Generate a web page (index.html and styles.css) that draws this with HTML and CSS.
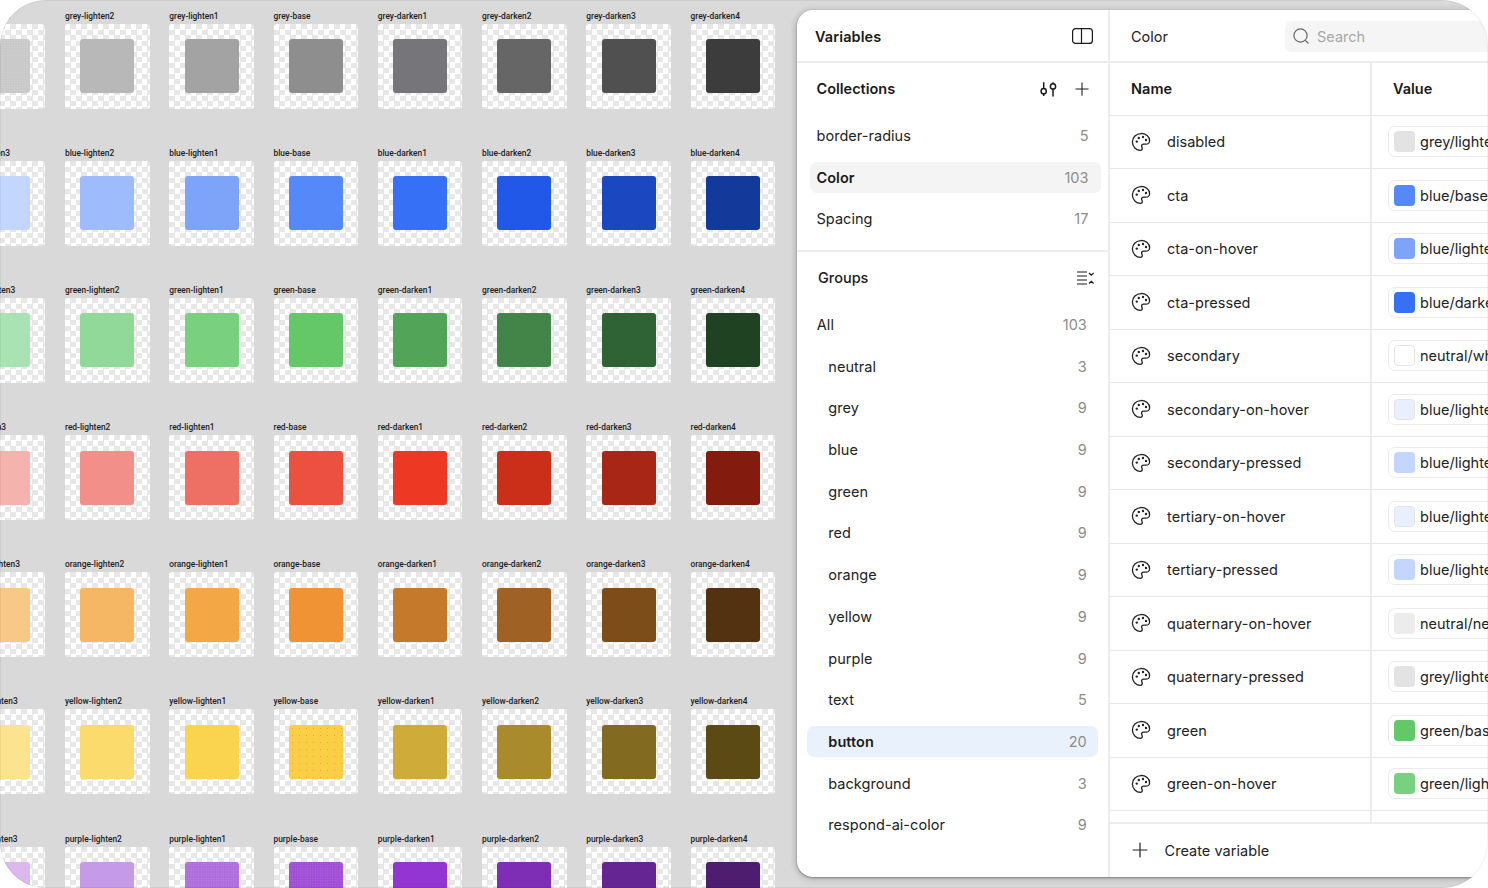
FILE: index.html
```html
<!DOCTYPE html>
<html lang="en">
<head>
<meta charset="utf-8">
<title>Variables</title>
<link rel="stylesheet" href="styles.css">
</head>
<body>
<svg class="defs" width="0" height="0" aria-hidden="true">
<symbol id="palette" viewBox="0 0 20 20"><path d="M10 1.6C5.2 1.6 1.4 5.3 1.4 10c0 4.700 3.800 8.400 8 8.400 1.300 0 1.900-.9 1.900-1.800 0-1.100-.7-1.500-.7-2.500 0-1.100.9-1.900 2-1.900h2.300c1.900 0 3.700-1.400 3.700-3.500 0-4.100-3.800-7.300-8.600-7.300z" fill="none" stroke="currentColor" stroke-width="1.300" stroke-linejoin="round"/><circle cx="5.800" cy="9.600" r="1.200" fill="currentColor"/><circle cx="7.800" cy="6" r="1.200" fill="currentColor"/><circle cx="12" cy="5" r="1.200" fill="currentColor"/><circle cx="15" cy="8" r="1.200" fill="currentColor"/></symbol>
<symbol id="plus" viewBox="0 0 16 16"><path d="M8 1v14M1 8h14" fill="none" stroke="currentColor" stroke-width="1.200" stroke-linecap="round"/></symbol>
</svg>
<div class="frame">
  <div class="canvas" id="canvas"></div>
  <div class="panel">
    <aside class="side">
      <header class="side-head">
        <span class="title">Variables</span>
        <svg class="ico-panel" width="21" height="16" viewBox="0 0 21 16"><rect x=".6" y=".6" width="19.800" height="14.800" rx="3" fill="none" stroke="currentColor" stroke-width="1.200"/><path d="M9.500 .6v14.800" stroke="currentColor" stroke-width="1.200"/></svg>
      </header>
      <section class="collections">
        <div class="sec-head">
          <span class="sec-title">Collections</span>
          <span class="sec-icons">
            <svg width="18" height="18" viewBox="0 0 18 18"><g fill="none" stroke="currentColor" stroke-width="1.500"><path d="M4.700 2.200v6.300M4.700 13.900v2.100M14 2.200v1.600M14 9v7.500"/><circle cx="4.700" cy="11.200" r="2.600"/><circle cx="14" cy="6.400" r="2.600"/></g></svg>
            <svg class="plus-s" width="14" height="14"><use href="#plus"/></svg>
          </span>
        </div>
        <div class="item"><span>border-radius</span><span class="count">5</span></div>
        <div class="item on-grey"><b>Color</b><span class="count">103</span></div>
        <div class="item"><span>Spacing</span><span class="count">17</span></div>
      </section>
      <section class="groups">
        <div class="sec-head">
          <span class="sec-title grp">Groups</span>
          <svg width="17" height="14" viewBox="0 0 17 14"><g fill="none" stroke="currentColor" stroke-width="1.200"><path d="M0 1h10M0 5h10M0 9h10M0 13h10M12 2l2.300 2.200L16.600 2M12 12.500l2.300-2.200 2.300 2.200"/></g></svg>
        </div>
        <div class="item all"><span>All</span><span class="count">103</span></div>
        <div class="item sub"><span>neutral</span><span class="count">3</span></div>
        <div class="item sub"><span>grey</span><span class="count">9</span></div>
        <div class="item sub"><span>blue</span><span class="count">9</span></div>
        <div class="item sub"><span>green</span><span class="count">9</span></div>
        <div class="item sub"><span>red</span><span class="count">9</span></div>
        <div class="item sub"><span>orange</span><span class="count">9</span></div>
        <div class="item sub"><span>yellow</span><span class="count">9</span></div>
        <div class="item sub"><span>purple</span><span class="count">9</span></div>
        <div class="item sub"><span>text</span><span class="count">5</span></div>
        <div class="item sub on-blue"><b>button</b><span class="count">20</span></div>
        <div class="item sub"><span>background</span><span class="count">3</span></div>
        <div class="item sub"><span>respond-ai-color</span><span class="count">9</span></div>
      </section>
    </aside>
    <main class="main">
      <header class="main-head">
        <span class="main-title">Color</span>
        <div class="search">
          <svg width="16" height="16" viewBox="0 0 16 16"><g fill="none" stroke="currentColor" stroke-width="1.200"><circle cx="7.500" cy="7.500" r="6.600"/><path d="M12.300 12.300l3.200 3.200"/></g></svg>
          <span>Search</span>
        </div>
      </header>
      <div class="table" id="table">
        <div class="row th"><div class="c-name"><b>Name</b></div><div class="c-val"><b class="val-h">Value</b></div></div>
      </div>
      <footer class="foot">
        <svg width="16" height="16"><use href="#plus"/></svg>
        <span>Create variable</span>
      </footer>
    </main>
  </div>
</div>
<script src="app.js"></script>
</body>
</html>
```

FILE: styles.css
```css
* { box-sizing: border-box; }
html, body { margin: 0; height: 100%; background: #fff; overflow: hidden; }
body { font-family: Inter, "Liberation Sans", sans-serif; color: #1a1a1a; }
.defs { position: absolute; }
.frame { position: relative; width: 1488px; height: 888px; border-radius: 46px; background: #d9d9d9; overflow: hidden; display: flex; }
.frame::after { content: ""; position: absolute; inset: 0; border-radius: 46px; box-shadow: inset 0 0 0 1px rgba(0,0,0,.05); pointer-events: none; }
.canvas { position: absolute; left: -39.25px; top: 0; width: 860px; display: grid; grid-template-columns: repeat(8, 84.5px); column-gap: 19.75px; grid-auto-rows: 137.1px; padding-top: 11px; }
.cell { display: flex; flex-direction: column; }
.cell-label { font: 500 8.4px/11px Roboto, sans-serif; color: #1c1c1c; height: 13px; white-space: nowrap; }
.tile { width: 84.5px; height: 84.5px; border-radius: 3px; display: flex; align-items: center; justify-content: center;
  background-color: #fff; background-image: conic-gradient(#e7e7e7 25%, #fff 0 50%, #e7e7e7 0 75%, #fff 0); background-size: 11px 11px; }
.swatch { width: 54px; height: 54px; border-radius: 3px; }
.grain { background-image: radial-gradient(rgba(255,255,255,.22) .6px, transparent .8px); background-size: 2.5px 2.5px; }
.speck { background-image: radial-gradient(rgba(240,120,70,.55) .5px, transparent .8px); background-size: 7px 7px; }

.panel { position: absolute; left: 797px; top: 10px; width: 720px; height: 866.5px; background: #fff; border-radius: 16px; box-shadow: 0 1px 2px rgba(0,0,0,.32), -1px 0 6px rgba(0,0,0,.14), 0 3px 8px rgba(0,0,0,.1); display: flex; overflow: hidden; }
.side { width: 313px; flex: none; border-right: 2px solid #ededed; display: flex; flex-direction: column; }
.side-head { height: 53px; padding: 1px 15px 0 18px; display: flex; justify-content: space-between; align-items: center; border-bottom: 2px solid #ededed; }
.title { font-weight: 600; font-size: 14.5px; letter-spacing: .1px; }
.collections { height: 189px; padding: 0 7.5px 0 13px; border-bottom: 2px solid #ededed; }
.groups { padding: 0 9.7px 0 10.3px; }
.sec-head { display: flex; justify-content: space-between; align-items: center; height: 51px; margin-bottom: 6px; padding: 0 4.5px 0 10.7px; }
.collections .sec-head { padding: 0 12px 0 6.5px; }
.sec-title { font-weight: 600; font-size: 14.5px; }
.sec-title.grp { font-weight: 500; }
.sec-icons { display: flex; align-items: center; gap: 18px; }
.item { height: 31px; margin-bottom: 10.7px; display: flex; justify-content: space-between; align-items: center; padding: 0 12px 0 6.5px; font-size: 14.5px; border-radius: 7px; color: #222; letter-spacing: .04px; }
.item b { font-weight: 600; color: #1a1a1a; }
.count { color: #8c8c8c; }
.groups .item { padding-right: 11.5px; }
.groups .all { padding-left: 9.5px; }
.groups .sub { padding-left: 21px; }
.on-grey { background: #f4f4f4; }
.on-blue { background: #e9f2fc; }

.main { flex: 1; min-width: 0; display: flex; flex-direction: column; }
.main-head { height: 53px; flex: none; display: flex; align-items: center; padding: 1px 0 0 21px; border-bottom: 2px solid #ededed; }
.main-title { font-size: 14.5px; width: 154px; flex: none; color: #222; }
.search { width: 300px; height: 31px; flex: none; border-radius: 7px; background: #f5f5f5; display: flex; align-items: center; gap: 8px; padding-left: 8px; color: #666; font-size: 14.5px; }
.search span { color: #a8a8a8; }
.table { flex: 1; min-height: 0; overflow: hidden; }
.row { height: 53.5px; display: flex; border-bottom: 1px solid #e8e8e8; }
.row.th { height: 52.5px; }
.th .c-name, .th .c-val { padding-bottom: 1px; }
.c-name { width: 262px; flex: none; display: flex; align-items: center; padding-left: 21px; gap: 16px; border-right: 2px solid #ededed; font-size: 14.5px; color: #222; letter-spacing: .04px; }
.c-val { flex: 1; display: flex; align-items: center; padding-left: 15.5px; font-size: 14.5px; color: #222; }
.th b { font-weight: 600; color: #1a1a1a; }
.val-h { padding-left: 5.5px; }
.chip { width: 200px; height: 31px; border: 1.5px solid #ebebeb; border-radius: 7px; display: flex; align-items: center; gap: 5px; padding-left: 5.5px; white-space: nowrap; }
.chip i { width: 21px; height: 21px; border-radius: 4px; flex: none; }
.foot { height: 54.5px; flex: none; border-top: 2px solid #ededed; background: #fff; display: flex; align-items: center; gap: 16.5px; padding-left: 22px; font-size: 14.5px; color: #222; letter-spacing: .04px; }
```

FILE: app.js
```js
var names = ['grey','blue','green','red','orange','yellow','purple'];
var steps = ['lighten3','lighten2','lighten1','base','darken1','darken2','darken3','darken4'];
var colors = {
  grey:['#c9c9c9','#b8b8b8','#a3a3a3','#8e8e8e','#76767a','#666666','#505050','#3c3c3c'],
  blue:['#c3d6fd','#9ebcfb','#7ea4fa','#5588f8','#3570f6','#2158e8','#1b47c0','#13399a'],
  green:['#a9e3b3','#90d998','#79d180','#65c868','#52a458','#438548','#2f6235','#1f4322'],
  red:['#f5b3ae','#f28f88','#ee6f63','#ec5040','#ed3824','#cb2f1a','#a82615','#831b0f'],
  orange:['#f8c886','#f6b765','#f4a745','#ef9335','#c57a2b','#a06224','#7c4c19','#523210'],
  yellow:['#fbe38f','#fadb6c','#fad34f','#facf45','#cfab39','#a98b2c','#826a21','#5b4a14'],
  purple:['#dcb8ee','#c59ae6','#ae6edd','#a04fd5','#9335d2','#7e2db5','#652693','#4f1d70']
};
var extra = {'yellow-base':'speck','purple-lighten1':'grain','purple-base':'grain','grey-lighten3':'grain'};
var canvas = document.getElementById('canvas');
names.forEach(function(n){
  steps.forEach(function(s,i){
    var id = n+'-'+s;
    var c = document.createElement('div'); c.className='cell';
    var l = document.createElement('div'); l.className='cell-label'; l.textContent=id;
    var t = document.createElement('div'); t.className='tile';
    var w = document.createElement('div'); w.className='swatch '+(extra[id]||'');
    w.style.backgroundColor = colors[n][i];
    t.appendChild(w); c.appendChild(l); c.appendChild(t); canvas.appendChild(c);
  });
});
var rows = [
 ['disabled','#e3e3e3','grey/lighten5'],['cta','#5588f8','blue/base'],['cta-on-hover','#7ea4fa','blue/lighten1'],
 ['cta-pressed','#3570f6','blue/darken1'],['secondary','#ffffff','neutral/white'],['secondary-on-hover','#e8f0fe','blue/lighten5'],
 ['secondary-pressed','#c3d6fd','blue/lighten3'],['tertiary-on-hover','#e8f0fe','blue/lighten5'],['tertiary-pressed','#c3d6fd','blue/lighten3'],
 ['quaternary-on-hover','#ececec','neutral/neutral'],['quaternary-pressed','#e3e3e3','grey/lighten5'],['green','#65c868','green/base'],
 ['green-on-hover','#79d180','green/lighten1'],['','','']
];
var table = document.getElementById('table');
rows.forEach(function(r){
  var d = document.createElement('div'); d.className='row';
  if (!r[0]) {
    d.innerHTML = '<div class="c-name"></div><div class="c-val"><div class="chip"></div></div>';
    table.appendChild(d);
    return;
  }
  d.innerHTML = '<div class="c-name"><svg width="20" height="20"><use href="#palette"/></svg><span>'+r[0]+'</span></div>'+
    '<div class="c-val"><div class="chip"><i></i><span>'+r[2]+'</span></div></div>';
  var sw = d.querySelector('i');
  sw.style.backgroundColor = r[1];
  if (r[1]==='#ffffff' || r[1]==='#e8f0fe') sw.style.border='1.5px solid #e4e4e4';
  table.appendChild(d);
});
```
